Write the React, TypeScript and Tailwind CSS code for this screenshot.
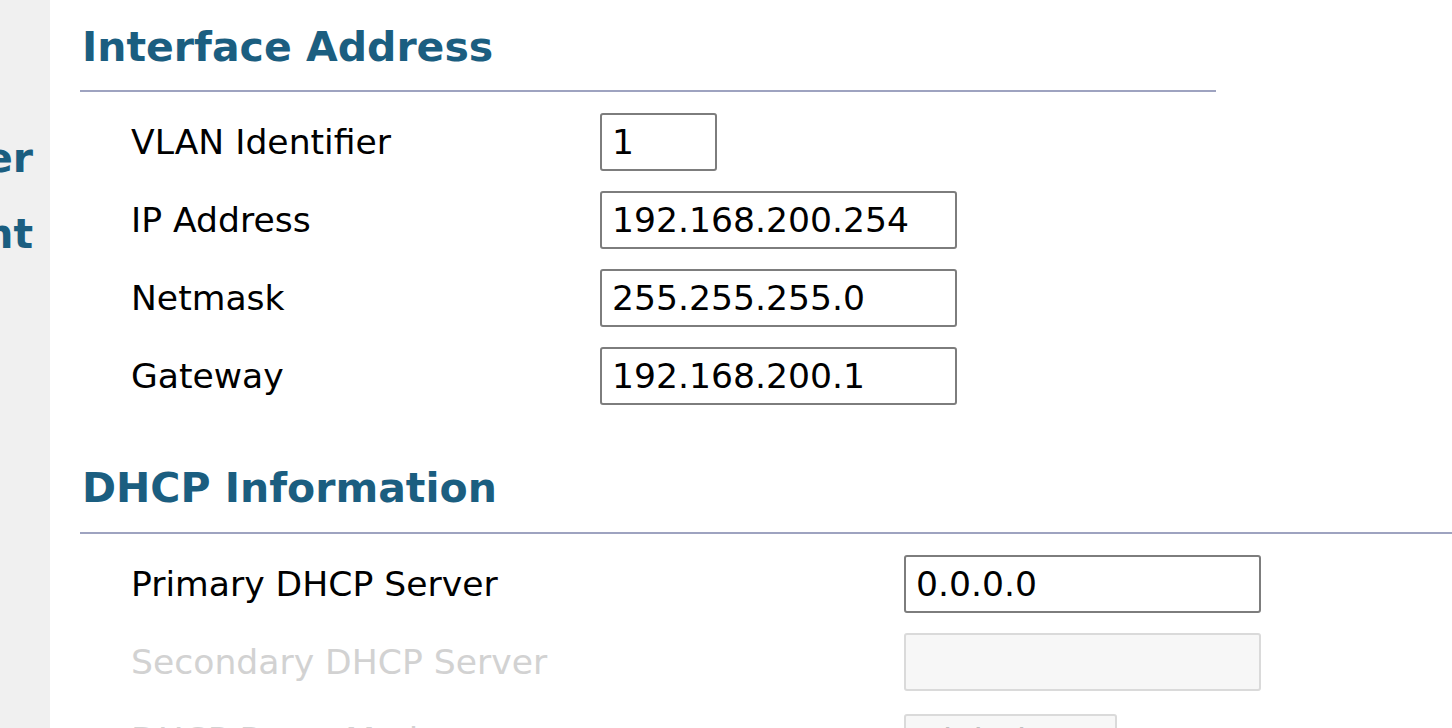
import React from "react";

type Row = {
  label: string;
  value?: string;
  width: string;
  disabled?: boolean;
};

const ifaceRows: Row[] = [
  { label: "VLAN Identifier", value: "1", width: "w-[117px]" },
  { label: "IP Address", value: "192.168.200.254", width: "w-[357px]" },
  { label: "Netmask", value: "255.255.255.0", width: "w-[357px]" },
  { label: "Gateway", value: "192.168.200.1", width: "w-[357px]" },
];

const dhcpRows: Row[] = [
  { label: "Primary DHCP Server", value: "0.0.0.0", width: "w-[357px]" },
  { label: "Secondary DHCP Server", value: "", width: "w-[357px]", disabled: true },
];

function Field({ row }: { row: Row }) {
  return (
    <input
      readOnly
      disabled={row.disabled}
      value={row.value}
      className={`${row.width} h-[58px] rounded-[3px] border-2 px-[10px] text-[34.6px] outline-none ${
        row.disabled
          ? "border-[#dadada] bg-[#f7f7f7] text-[#c8c8c8]"
          : "border-[#7d7d7d] bg-white text-black"
      }`}
    />
  );
}

function FormRows({ rows, inputCol }: { rows: Row[]; inputCol: string }) {
  return (
    <div className="flex flex-col gap-[20px] pl-[51px]">
      {rows.map((r) => (
        <div key={r.label} className={`grid ${inputCol} items-center`}>
          <span className={r.disabled ? "text-[#d2d2d2]" : "text-black"}>{r.label}</span>
          <Field row={r} />
        </div>
      ))}
    </div>
  );
}

export default function App() {
  return (
    <div
      className="flex h-[728px] overflow-hidden bg-white text-[34.6px] leading-[40px]"
      style={{ fontFamily: '"DejaVu Sans", Verdana, sans-serif' }}
    >
      <aside className="w-[50px] shrink-0 overflow-hidden bg-[#f0f0f0] pt-[120px] text-[41px] font-bold leading-[76px] text-[#1b5e80]">
        <div className="flex justify-end whitespace-nowrap pr-[17px]">
          <span>Internal DHCP Server</span>
        </div>
        <div className="flex justify-end whitespace-nowrap pr-[17px]">
          <span>Mobility Management</span>
        </div>
      </aside>

      <main className="min-w-0 flex-1 pl-[30px]">
        <section className="w-[1136px]">
          <h2 className="mt-[23px] pl-[2px] text-[41px] font-bold leading-[48px] text-[#1b5e80]">
            Interface Address
          </h2>
          <div className="mt-[19px] h-[2px] bg-[#9ea3c0]" />
          <div className="mt-[21px]">
            <FormRows rows={ifaceRows} inputCol="grid-cols-[469px_1fr]" />
          </div>
        </section>

        <section>
          <h2 className="mt-[59px] pl-[2px] text-[41px] font-bold leading-[48px] text-[#1b5e80]">
            DHCP Information
          </h2>
          <div className="mt-[20px] h-[2px] bg-[#9ea3c0]" />
          <div className="mt-[21px]">
            <FormRows rows={dhcpRows} inputCol="grid-cols-[773px_1fr]" />
            <div className="mt-[20px] grid grid-cols-[773px_1fr] items-center pl-[51px]">
              <span className="text-[#d2d2d2]">DHCP Proxy Mode</span>
              <div className="mt-[3px] flex h-[54px] w-[213px] items-center rounded-[3px] border-2 border-[#dadada] bg-[#f7f7f7] px-[10px] text-[#c0c0c0]">
                Global
              </div>
            </div>
          </div>
        </section>
      </main>
    </div>
  );
}
